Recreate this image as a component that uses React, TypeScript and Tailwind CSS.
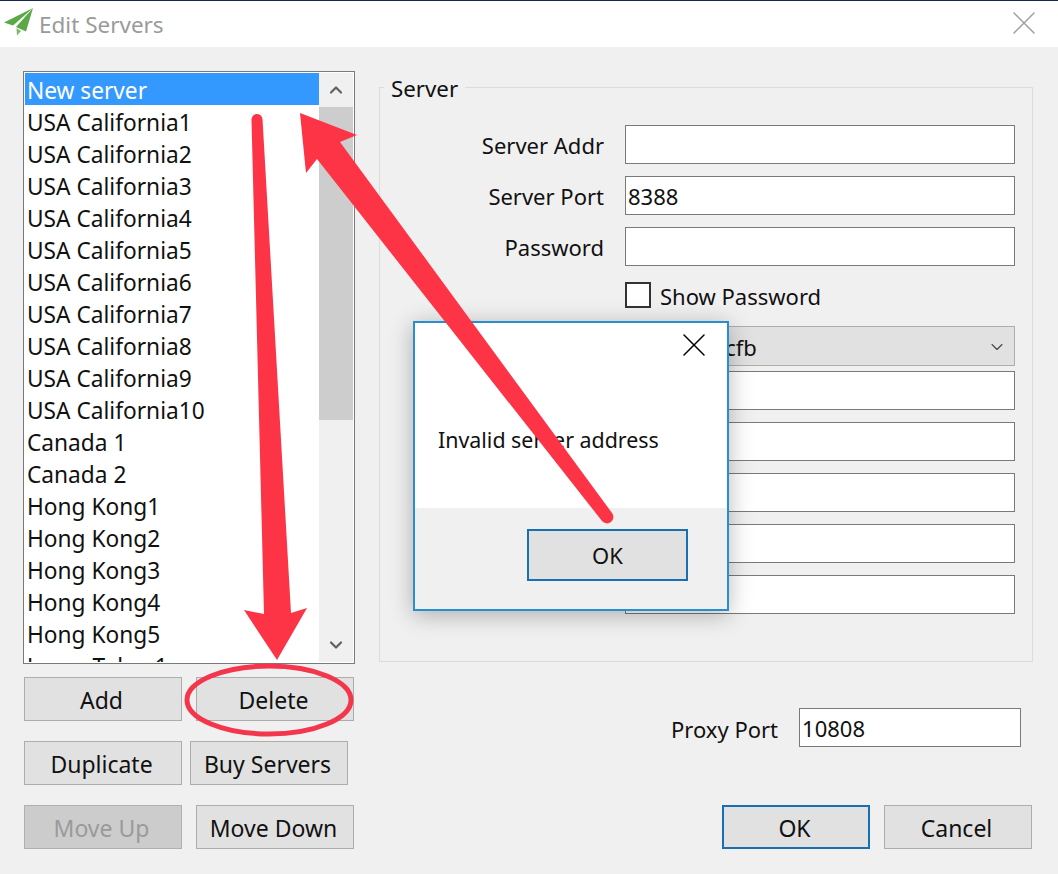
import { ChevronDown, ChevronUp, X } from 'lucide-react';

const servers = [
  'New server',
  'USA California1',
  'USA California2',
  'USA California3',
  'USA California4',
  'USA California5',
  'USA California6',
  'USA California7',
  'USA California8',
  'USA California9',
  'USA California10',
  'Canada 1',
  'Canada 2',
  'Hong Kong1',
  'Hong Kong2',
  'Hong Kong3',
  'Hong Kong4',
  'Hong Kong5',
  'Japan Tokyo1',
];

type Tone = 'normal' | 'disabled' | 'focus';

const tones: Record<Tone, string> = {
  normal: 'border border-[#adadad] bg-[#e1e1e1] text-[#111]',
  disabled: 'border border-[#b0b0b0] bg-[#cccccc] text-[#9a9a9a]',
  focus: 'border-2 border-[#1a6fb0] bg-[#e1e1e1] text-[#111]',
};

function Btn({ label, tone = 'normal', width = 'w-[158px]' }: { label: string; tone?: Tone; width?: string }) {
  return (
    <button className={`h-[44px] pr-[3px] pt-[2px] text-center text-[23px] ${width} ${tones[tone]}`}>
      {label}
    </button>
  );
}

function Field({ label, value = '', className = '' }: { label?: string; value?: string; className?: string }) {
  return (
    <div className={`flex h-[39px] items-center ${className}`}>
      <span className="w-[224px] text-right text-[#111]">{label}</span>
      <div className="ml-[21px] flex h-full w-[390px] items-center border border-[#7a7a7a] bg-white pl-[2px] text-[#111]">
        {value}
      </div>
    </div>
  );
}

export default function App() {
  return (
    <div className="relative h-[874px] w-[1058px] overflow-hidden border-t border-[#13294b] bg-[#f0f0f0] font-['Noto_Sans',sans-serif] text-[22px] leading-none">
      {/* Title bar */}
      <div className="flex h-[46px] items-center bg-white pl-[3px] pr-[14px]">
        <svg width="32" height="32" viewBox="0 0 32 32" className="-mt-[2px]">
          <path d="M30 1 1 15.500 10 18.500Z" fill="#5aa846" />
          <path d="M30 1 13 20 23 24.500Z" fill="#5aa846" />
          <path d="M13.500 21 14 28.500 18 24Z" fill="#7fb56f" />
        </svg>
        <span className="ml-[4px] pt-[2px] text-[22.5px] text-[#9a9a9a]">Edit Servers</span>
        <X size={40} strokeWidth={0.9} className="-mt-[2px] ml-auto text-[#a0a0a0]" />
      </div>

      <div className="flex pl-[23px] pt-[24px]">
        {/* Left column */}
        <div className="w-[332px]">
          <div className="flex h-[593px] border border-[#7a7a7a] bg-white p-[1px]">
            <div className="w-[294px] overflow-hidden text-[22.7px]">
              {servers.map((s, i) => (
                <div
                  key={s}
                  className={`flex h-[32px] items-center pl-[2px] pt-[4px] ${i === 0 ? 'bg-[#3399ff] text-white' : 'text-[#111]'}`}
                >
                  {s}
                </div>
              ))}
            </div>
            <div className="ml-auto flex w-[34px] flex-col bg-[#f0f0f0]">
              <div className="flex h-[34px] items-center justify-center">
                <ChevronUp size={20} strokeWidth={2.6} className="text-[#606060]" />
              </div>
              <div className="h-[313px] bg-[#cdcdcd]" />
              <div className="mt-auto flex h-[34px] items-center justify-center">
                <ChevronDown size={20} strokeWidth={2.6} className="text-[#606060]" />
              </div>
            </div>
          </div>
          <div className="mt-[13px] flex justify-between px-[1px]">
            <Btn label="Add" />
            <Btn label="Delete" />
          </div>
          <div className="mt-[20px] flex gap-[8px] pl-[1px]">
            <Btn label="Duplicate" />
            <Btn label="Buy Servers" />
          </div>
          <div className="mt-[20px] flex justify-between px-[1px]">
            <Btn label="Move Up" tone="disabled" />
            <Btn label="Move Down" />
          </div>
        </div>

        {/* Right column */}
        <div className="ml-[24px] w-[654px]">
          <div className="relative mt-[16px] h-[575px] border border-[#dcdcdc] pt-[37px]">
            <span className="absolute -top-[10px] left-[4px] bg-[#f0f0f0] px-[7px] text-[22.3px] text-[#111]">Server</span>
            <Field label="Server Addr" />
            <Field label="Server Port" value="8388" className="mt-[12px]" />
            <Field label="Password" className="mt-[12px]" />
            <div className="ml-[245px] mt-[16px] flex h-[26px] items-center">
              <div className="h-[26px] w-[26px] border-2 border-[#333] bg-white" />
              <span className="ml-[9px] pt-[2px] text-[#111]">Show Password</span>
            </div>
            <div className="ml-[245px] mt-[18px] flex h-[40px] w-[390px] items-center border border-[#adadad] bg-[#e1e1e1] pl-[12px] pt-[2px] text-[#111]">
              aes-256-cfb
              <ChevronDown size={20} strokeWidth={1.3} className="ml-auto mr-[7px] text-[#444]" />
            </div>
            <Field className="mt-[5px]" />
            <Field className="mt-[12px]" />
            <Field className="mt-[12px]" />
            <Field className="mt-[12px]" />
            <Field className="mt-[12px]" />
          </div>
          <div className="ml-[292px] mt-[46px] flex h-[39px] items-center">
            <span className="pt-[2px] text-[#111]">Proxy Port</span>
            <div className="ml-[21px] flex h-full w-[222px] items-center border border-[#7a7a7a] bg-white pl-[2px] text-[#111]">
              10808
            </div>
          </div>
          <div className="mt-[58px] flex gap-[14px] pl-[343px]">
            <Btn label="OK" tone="focus" width="w-[148px]" />
            <Btn label="Cancel" width="w-[148px]" />
          </div>
        </div>
      </div>

      {/* Message box */}
      <div className="absolute left-[413px] top-[320px] flex h-[290px] w-[316px] flex-col border-2 border-[#2a8dd0] bg-[#f0f0f0] shadow-[0_4px_22px_rgba(0,0,0,0.28)]">
        <div className="relative h-[185px] bg-white pl-[23px] pt-[106px] text-[21.4px] text-[#111]">
          <X size={40} strokeWidth={0.9} className="absolute right-[13px] top-[2px] text-black" />
          Invalid server address
        </div>
        <div className="flex justify-end pr-[39px] pt-[21px]">
          <button className="h-[52px] w-[161px] border-2 border-[#1a6fb0] bg-[#e1e1e1] text-[#111]">OK</button>
        </div>
      </div>

      {/* Red annotations */}
      <svg className="pointer-events-none absolute left-0 top-0" width="1058" height="874" viewBox="0 0 1058 874">
        <path
          d="M251.500 119a5.500 5.500 0 0 1 11-1L291 612 307 607 277 659 244 609 264 613Z"
          fill="#fd3346"
        />
        <path
          d="M300 112 357 134 340 141 612 512a6 6 0 0 1-10 8L317 158 306 172Z"
          fill="#fd3346"
        />
        <ellipse cx="269" cy="699" rx="82" ry="34" fill="none" stroke="#f4364c" strokeWidth="5" />
      </svg>
    </div>
  );
}
